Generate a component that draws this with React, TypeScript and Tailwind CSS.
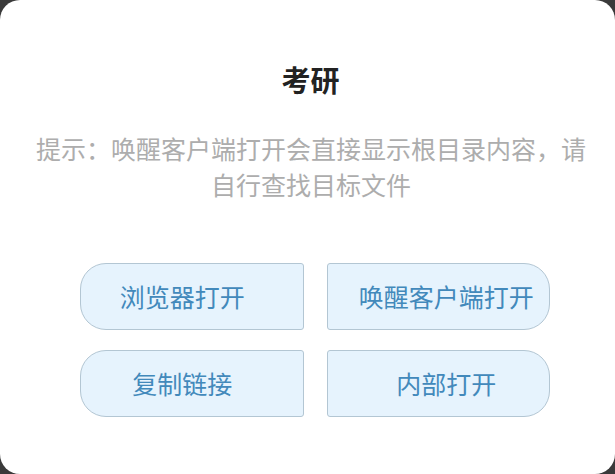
export default function App() {
  const font = { fontFamily: '"Noto Sans CJK SC", "Noto Sans", sans-serif' }
  const buttons = [
    { label: "浏览器打开", side: "left" },
    { label: "唤醒客户端打开", side: "right" },
    { label: "复制链接", side: "left" },
    { label: "内部打开", side: "right" },
  ]

  return (
    <div className="w-[615px] h-[474px] bg-[#3a3a3a] overflow-hidden" style={font}>
      <div className="w-full h-full bg-white rounded-[20px] pt-[59px]">
        <h1 className="pl-[6px] text-center text-[29px] leading-[40px] font-bold text-[#222222]">考研</h1>
        <p className="mt-[31px] ml-[31px] w-[560px] text-center text-[25px] leading-[36px] text-[#adadad]">
          提示：唤醒客户端打开会直接显示根目录内容，请自行查找目标文件
        </p>
        <div className="mt-[61px] ml-[80px] w-[470px] grid grid-cols-2 gap-x-[23px] gap-y-[20px]">
          {buttons.map((b) => (
            <button
              key={b.label}
              className={
                b.side === "left"
                  ? "h-[67px] flex items-center justify-center pr-[19px] bg-[#e6f3fd] border-[1.5px] border-[#b3c6d3] rounded-l-[26px] rounded-r-[3px] text-[25px] text-[#4289bb]"
                  : "h-[67px] flex items-center justify-center pl-[16px] bg-[#e6f3fd] border-[1.5px] border-[#b3c6d3] rounded-r-[26px] rounded-l-[3px] text-[25px] text-[#4289bb]"
              }
            >
              {b.label}
            </button>
          ))}
        </div>
      </div>
    </div>
  )
}
